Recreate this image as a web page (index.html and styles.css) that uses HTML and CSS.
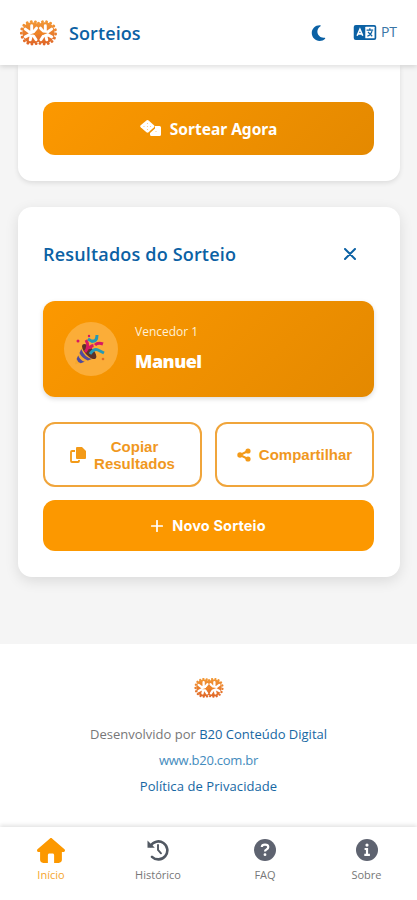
FILE: index.html
```html
<!DOCTYPE html>
<html lang="pt">
<head>
<meta charset="utf-8">
<meta name="viewport" content="width=device-width, initial-scale=1">
<title>Sorteios</title>
<link rel="stylesheet" href="styles.css">
</head>
<body>
<svg class="defs" width="0" height="0" aria-hidden="true">
  <defs>
    <linearGradient id="flame" gradientUnits="userSpaceOnUse" x1="0" y1="0" x2="0" y2="26"><stop offset="0" stop-color="#f39a35"/><stop offset="1" stop-color="#df6427"/></linearGradient>
    <symbol id="logo" viewBox="0 0 38 26">
      <path d="M19 4C23 1 29 1 33 5C37 10 36 17 32 21C28 25 23 24 19 22C15 24 9 25 6 21C2 17 1 10 5 5C9 1 15 1 19 4Z" fill="url(#flame)"/>
      <path d="M19 3C23 .5 29 .5 33.500 4.500C38 9 37.500 17 33 21.500C29 25 23 25 19 23C15 25 9 25 5 21.500C.5 17 0 9 4.500 4.500C9 .5 15 .5 19 3Z" fill="none" stroke="url(#flame)" stroke-width="2.900" stroke-linecap="round" stroke-dasharray=".1 4.200"/>
      <path d="M12 13V5.500M11 13L5.500 9M11 14L5.500 17M12 14l-1.500 6M13 13l4-5M14 16l2.500 4M26 13V5.500M27 13l5.500-4M27 14l5.500 3M26 14l1.500 6M25 13l-4-5M24 16l-2.500 4" fill="none" stroke="#fff" stroke-width="3" stroke-linecap="round"/>
      <path d="M10 14.500l5-1.500 2-2 2 1.500 2-2 2.500 2 5 .5-5 2-4-1-3 1.500-2-1z" fill="#ef8426"/>
    </symbol>
  </defs>
</svg>
<header class="topbar">
  <svg class="brand-logo"><use href="#logo"/></svg>
  <span class="brand">Sorteios</span>
  <svg class="moon" viewBox="0 0 384 512"><path d="M223.500 32C100 32 0 132.300 0 256s100 224 223.500 224c60.600 0 115.500-24.200 155.800-63.400 5-4.900 6.300-12.500 3.100-18.700s-10.100-9.700-17-8.500c-9.800 1.700-19.800 2.600-30.100 2.600-96.900 0-175.500-78.800-175.500-176 0-65.800 36-123.100 89.300-153.300 6.100-3.500 9.200-10.500 7.700-17.300s-7.300-11.900-14.300-12.500c-6.300-.5-12.600-.8-19-.8z"/></svg>
  <svg class="language" viewBox="0 0 24 16">
    <rect width="24" height="16" rx="2.200" fill="#0b61a4"/>
    <rect x="12.300" y="1.800" width="9.900" height="12.400" rx=".6" fill="#fff"/>
    <path d="M3.600 11.500L6.600 4.500l3 7M4.900 9.500h3.400" fill="none" stroke="#fff" stroke-width="1.700"/>
    <path d="M13.700 5.500h7M17.200 3.500v2M15.200 7.500l4.500 4.500M19.500 6.500q-1 4-5 5.500" fill="none" stroke="#0b61a4" stroke-width="1.300"/>
  </svg>
  <span class="locale">PT</span>
</header>
<main>
  <section class="card draw-card">
    <button class="button draw">
      <svg class="dice" viewBox="0 0 22 17">
        <path d="M6.400.5Q7.500-.4 8.600.5L14 5.300q1 1 0 2L8.600 12.300q-1.100.9-2.200 0L.7 7.300q-1-1 0-2z" fill="#fff"/>
        <path d="M15 6h4.500Q21 6 21 7.500v7q0 1.500-1.500 1.500h-8Q10 16 10 14.500V13l5-4.500z" fill="#fff"/>
        <g fill="#f9c47a"><circle cx="7.500" cy="3.500" r=".6"/><circle cx="4" cy="6.500" r=".6"/><circle cx="7.500" cy="6.500" r=".6"/><circle cx="10.500" cy="6.500" r=".6"/><circle cx="7.500" cy="9.500" r=".6"/><circle cx="16" cy="11.500" r=".6"/></g>
      </svg>
      <span>Sortear Agora</span>
    </button>
  </section>
  <section class="card results">
    <div class="results-head">
      <h2>Resultados do Sorteio</h2>
      <svg class="close" viewBox="0 0 12 12"><path d="M1 1l10 10M11 1L1 11" fill="none" stroke="#0b61a4" stroke-width="2" stroke-linecap="round"/></svg>
    </div>
    <div class="winner">
      <div class="party">
        <svg viewBox="0 0 36 34">
          <path d="M10 13L2 31Q2 33 4 32L22 26z" fill="#f6a82d"/>
          <path d="M8.300 17q3 8 10.500 10l-4 1.500Q8.500 26 6.500 21zM5.200 23.500q2 5 6.500 6.300l-4 1.400Q4.500 30 3.600 27z" fill="#514b9d"/>
          <ellipse cx="16.200" cy="19.500" rx="4.200" ry="9.500" transform="rotate(-43 16.200 19.500)" fill="#5d3228"/>
          <path d="M12 20q5-5 1-12M17 17q0-3 3.500-3.500M22 13q3-3 8-1" fill="none" stroke="#d71962" stroke-width="3"/>
          <path d="M17 22q4-6 8-4t6 3M19 9q5 1 5-6M15 7l5 3" fill="none" stroke="#2599b5" stroke-width="3"/>
          <circle cx="5" cy="9" r="1.500" fill="#d71962"/><circle cx="16" cy="4" r="1.200" fill="#d71962"/><circle cx="30" cy="27" r="1.300" fill="#e46b25"/>
        </svg>
      </div>
      <div><p class="place">Vencedor 1</p><p class="winner-name">Manuel</p></div>
    </div>
    <div class="actions">
      <button class="button outline copy">
        <svg viewBox="0 0 16 16"><path d="M7 0h5l4 4v7q0 1-1 1H7Q6 12 6 11V1q0-1 1-1z" fill="#f39a18"/><path d="M5 4H2Q1 4 1 5v9q0 1 1 1h6q1 0 1-1v-1" fill="none" stroke="#f39a18" stroke-width="1.800"/></svg>
        <span>Copiar<br>Resultados</span>
      </button>
      <button class="button outline share">
        <svg viewBox="0 0 14 14"><path d="M11 3L3 7l8 4" fill="none" stroke="#f39a18" stroke-width="2"/><g fill="#f39a18"><circle cx="11" cy="3" r="2.600"/><circle cx="3" cy="7" r="2.700"/><circle cx="11" cy="11" r="2.600"/></g></svg>
        <span>Compartilhar</span>
      </button>
    </div>
    <button class="button new-draw">
      <svg viewBox="0 0 12 12"><path d="M6 .7v10.600M.7 6h10.600" stroke="#fff" stroke-width="1.700" stroke-linecap="round"/></svg>
      <span>Novo Sorteio</span>
    </button>
  </section>
</main>
<footer>
  <svg class="footer-logo"><use href="#logo"/></svg>
  <p class="credit">Desenvolvido por <a class="strong">B20 Conteúdo Digital</a></p>
  <p class="site"><a>www.b20.com.br</a></p>
  <p class="privacy"><a class="strong">Política de Privacidade</a></p>
</footer>
<nav>
  <a class="tab active">
    <svg class="home" viewBox="0 0 576 512"><path d="M575.800 255.500c0 18-15 32.100-32 32.100h-32l.7 160.200c.2 35.500-28.500 64.300-64 64.300H352V352c0-18-14-32-32-32h-64c-18 0-32 14-32 32v160h-96.500c-35.300 0-64-28.700-64-64V287.600H32c-18 0-32-14-32-32.100 0-9 3-17 10-24L266.400 8c7-7 15-8 22-8s15 2 21 7l255.400 224.500c8 7 12 15 11 24z"/></svg>
    <span>Início</span>
  </a>
  <a class="tab history">
    <svg viewBox="0 0 22 22"><path d="M3.500 7A9 9 0 1 1 5 17.800" fill="none" stroke="#515862" stroke-width="2.600" stroke-linecap="round"/><path d="M.5 1.500v7.300h7.300z" fill="#515862"/><path d="M11 6v5l3 3.300" fill="none" stroke="#515862" stroke-width="1.900" stroke-linecap="round"/></svg>
    <span>Histórico</span>
  </a>
  <a class="tab faq">
    <svg viewBox="0 0 22 22"><circle cx="11" cy="11" r="11" fill="#5e6370"/><path d="M7.800 8q.1-2.300 3.200-2.300t3.300 2.300q0 1.500-1.800 2.400-1.500.6-1.500 2" fill="none" stroke="#fff" stroke-width="2.200"/><circle cx="11" cy="15.700" r="1.400" fill="#fff"/></svg>
    <span>FAQ</span>
  </a>
  <a class="tab about">
    <svg viewBox="0 0 22 22"><circle cx="11" cy="11" r="11" fill="#5e6370"/><circle cx="11" cy="6.100" r="1.600" fill="#fff"/><path d="M8.600 10H11v5.800M8.300 15.800h5.600" fill="none" stroke="#fff" stroke-width="2.200"/></svg>
    <span>Sobre</span>
  </a>
</nav>
</body>
</html>
```
FILE: styles.css
```css
* { box-sizing: border-box; }
body { margin: 0; height: 900px; overflow: hidden; display: flex; flex-direction: column; background: #f5f5f5; color: #777; font-family: "Open Sans", "Noto Sans", sans-serif; }
svg { display: block; flex: none; }
h2, p { margin: 0; }
.defs { position: absolute; }
.topbar { height: 65px; flex: none; display: flex; align-items: center; padding: 0 19px 0 20px; background: #fff; box-shadow: 0 2px 5px rgba(0,0,0,.13); z-index: 2; }
.brand-logo { width: 37px; height: 26px; margin-right: 12px; }
.brand { font-size: 18px; font-weight: 600; letter-spacing: .1px; color: #0b61a4; width: 74px; white-space: nowrap; }
.moon { width: 15px; height: 18px; margin-left: auto; fill: #0b61a4; }
.language { width: 24px; height: 15px; margin-left: 27px; }
.locale { width: 17px; margin-left: 4px; font-size: 14px; line-height: 18px; margin-bottom: 2px; letter-spacing: -.2px; color: #3a75a5; }
main { height: 579px; flex: none; padding: 0 17px 0 18px; }
.card { background: #fff; padding: 0 26px 26px 25px; }
.draw-card { height: 116px; padding-top: 37px; border-radius: 0 0 14px 14px; box-shadow: 0 2px 5px rgba(0,0,0,.1); }
.button { width: 100%; display: flex; align-items: center; justify-content: center; border: 0; padding: 0; border-radius: 12px; font-family: Inter, sans-serif; font-weight: 700; color: #fff; background: #fc9800; }
.draw { height: 53px; gap: 8px; font-family: "Noto Sans", sans-serif; font-size: 15.5px; background: linear-gradient(135deg, #fc9800, #e48900); }
.dice { width: 22px; height: 17px; }
.results { height: 370px; margin-top: 26px; border-radius: 14px; box-shadow: 0 4px 14px rgba(0,0,0,.11); }
.results-head { height: 94px; display: flex; align-items: center; justify-content: space-between; }
h2 { font-size: 18px; font-weight: 600; letter-spacing: .18px; color: #0b61a4; white-space: nowrap; }
.close { width: 12px; height: 12px; margin-right: 18px; }
.winner { height: 96px; display: flex; align-items: center; gap: 17px; padding-left: 21px; border-radius: 12px; background: linear-gradient(135deg, #fc9800, #e48900); color: #fff; box-shadow: 0 2px 5px rgba(0,0,0,.14); }
.party { width: 54px; height: 54px; display: flex; align-items: center; justify-content: center; border-radius: 50%; background: #fbad38; }
.party svg { width: 36px; height: 34px; }
.place { font-size: 12px; line-height: 16px; letter-spacing: 0; color: #fff0d5; }
.winner-name { margin-top: 7px; font-size: 18px; line-height: 28px; font-weight: 800; letter-spacing: -.5px; }
.actions { display: grid; grid-template-columns: 1fr 1fr; gap: 13px; margin: 25px 0 13px; }
.outline { height: 65px; border: 2px solid #f0a53b; background: #fff; color: #f0981f; font-family: "Liberation Sans", sans-serif; font-size: 15px; line-height: 17px; }
.copy { gap: 8px; }
.copy svg { width: 16px; height: 16px; }
.share { gap: 8px; }
.share svg { width: 14px; height: 14px; }
.new-draw { height: 51px; gap: 9px; font-size: 14.5px; letter-spacing: .15px; }
.new-draw svg { width: 12px; height: 12px; }
footer { height: 183px; flex: none; display: flex; flex-direction: column; align-items: center; padding-top: 34px; background: #fff; font-size: 13px; line-height: 26px; }
.footer-logo { width: 30px; height: 20px; margin-bottom: 23px; }
footer p { white-space: nowrap; letter-spacing: 0; }
footer .site { letter-spacing: -.25px; }
footer a { color: #448bbd; }
footer .strong { font-weight: 500; color: #1767a3; }
.privacy { letter-spacing: .08px; }
nav { height: 73px; flex: none; display: grid; grid-template-columns: 102px 112px 102px 101px; padding: 10px 0 0; background: #fff; box-shadow: 0 -2px 4px rgba(0,0,0,.11); z-index: 2; }
.tab { display: flex; flex-direction: column; align-items: center; font-size: 11px; line-height: 16px; color: #777; }
.tab svg { width: 22px; height: 22px; margin: 2px 0 6px; }
.tab .home { width: 28px; height: 25px; fill: #fc9800; margin: 1px 0 4px; }
.active { color: #f5a52d; }
```
